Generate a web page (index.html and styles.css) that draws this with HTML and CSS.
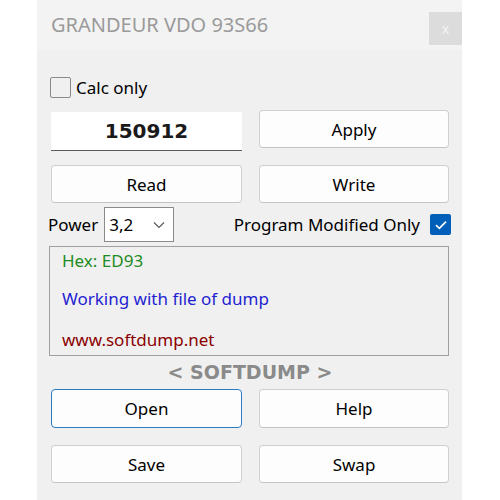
FILE: index.html
```html
<!DOCTYPE html>
<html>
<head>
<meta charset="utf-8">
<link rel="stylesheet" href="styles.css">
</head>
<body>
<div class="window">
  <div class="titlebar">
    <span class="title">GRANDEUR VDO 93S66</span>
    <span class="close">x</span>
  </div>
  <div class="content">
    <label class="calc-row"><span class="box"></span><span>Calc only</span></label>
    <div class="grid row-input">
      <div class="field">150912</div>
      <button class="btn btn-apply">Apply</button>
    </div>
    <div class="grid row-rw">
      <button class="btn">Read</button>
      <button class="btn">Write</button>
    </div>
    <div class="power-row">
      <span class="power-label">Power</span>
      <span class="select"><span>3,2</span>
        <svg class="chev" width="12" height="8" viewBox="0 0 12 8"><path d="M1 1.5 L6 6.5 L11 1.5" fill="none" stroke="#555" stroke-width="1.1"/></svg>
      </span>
      <span class="spacer"></span>
      <span class="pmo">Program Modified Only</span>
      <span class="check">
        <svg width="14" height="12" viewBox="0 0 14 12"><path d="M2 6.2 L5.4 9.4 L12 2.6" fill="none" stroke="#fff" stroke-width="1.6"/></svg>
      </span>
    </div>
    <div class="log">
      <div class="l-green">Hex: ED93</div>
      <div class="l-blue">Working with file of dump</div>
      <div class="l-red">www.softdump.net</div>
    </div>
    <div class="brand">&lt; SOFTDUMP &gt;</div>
    <div class="grid row-open">
      <button class="btn btn-focus">Open</button>
      <button class="btn">Help</button>
    </div>
    <div class="grid row-save">
      <button class="btn">Save</button>
      <button class="btn">Swap</button>
    </div>
  </div>
</div>
</body>
</html>
```
FILE: styles.css
```css
html, body {
  margin: 0;
  padding: 0;
  background: #ffffff;
}
body {
  font-family: "Noto Sans", "Open Sans", sans-serif;
  font-size: 17px;
  color: #000;
}
.window {
  margin-left: 37px;
  width: 425px;
  height: 500px;
  background: #f0f0f0;
  display: flex;
  flex-direction: column;
}
.titlebar {
  height: 50px;
  background: #f3f3f3;
  display: flex;
  align-items: flex-start;
  justify-content: space-between;
}
.title {
  margin-top: 11px;
  margin-left: 14px;
  font-size: 20px;
  color: #9a9a9a;
}
.close {
  margin-top: 12px;
  width: 33px;
  height: 33px;
  background: #dcdcdc;
  color: #f4f4f4;
  font-size: 14px;
  display: flex;
  align-items: center;
  justify-content: center;
}
.content {
  padding: 0 13px 0 14px;
  display: flex;
  flex-direction: column;
}
.calc-row {
  margin-top: 27px;
  display: flex;
  align-items: center;
  gap: 5px;
  height: 21px;
  font-size: 17px;
  margin-left: -1px;
}
.box {
  width: 19px;
  height: 19px;
  border: 1px solid #8a8a8a;
  border-radius: 2px;
  background: #f0f0f0;
}
.grid {
  display: grid;
  grid-template-columns: 191px 190px;
  column-gap: 17px;
}
.row-input {
  margin-top: 12px;
  height: 41px;
}
.field {
  margin-top: 2px;
  height: 38px;
  background: #ffffff;
  border-bottom: 1px solid #5a5a5a;
  font-family: "DejaVu Sans", "Liberation Sans", sans-serif;
  font-weight: bold;
  font-size: 20px;
  color: #1a1a1a;
  display: flex;
  align-items: center;
  justify-content: center;
}
.btn {
  height: 38px;
  background: #fdfdfd;
  border: 1px solid #d0d0d0;
  border-bottom-color: #c4c4c4;
  border-radius: 4px;
  font-family: "Noto Sans", "Open Sans", sans-serif;
  font-size: 17px;
  color: #000;
  padding: 0;
}
.row-rw {
  margin-top: 14px;
}
.power-row {
  margin-top: 4px;
  margin-left: -3px;
  height: 35px;
  display: flex;
  align-items: center;
}
.power-label {
  font-size: 17px;
  margin-right: 6px;
}
.select {
  width: 70px;
  height: 35px;
  border: 1px solid #8a8a8a;
  background: #fff;
  display: flex;
  align-items: center;
  justify-content: space-between;
  padding: 0 8px 0 4px;
  box-sizing: border-box;
  font-size: 17px;
}
.spacer { flex: 1; }
.pmo {
  font-size: 17px;
  margin-right: 10px;
}
.check {
  width: 21px;
  height: 21px;
  background: #005fb8;
  border-radius: 2px;
  display: flex;
  align-items: center;
  justify-content: center;
  margin-right: -2px;
}
.log {
  margin-top: 4px;
  margin-left: -2px;
  width: 400px;
  height: 110px;
  box-sizing: border-box;
  border: 1px solid #a0a0a0;
  padding: 2px 0 0 12px;
  font-size: 17px;
  display: flex;
  flex-direction: column;
}
.l-green { color: #1e8c1e; height: 38px; }
.l-blue { color: #1f1fd0; height: 41px; }
.l-red { color: #8b0000; }
.brand {
  margin-top: 5px;
  height: 28px;
  text-align: center;
  font-family: "DejaVu Sans", "Liberation Sans", sans-serif;
  font-weight: bold;
  font-size: 19px;
  color: #8a8a8a;
}
.row-open .btn { height: 39px; }
.btn-focus {
  border: 1px solid #2d7bc4;
}
.row-save {
  margin-top: 17px;
}
```
